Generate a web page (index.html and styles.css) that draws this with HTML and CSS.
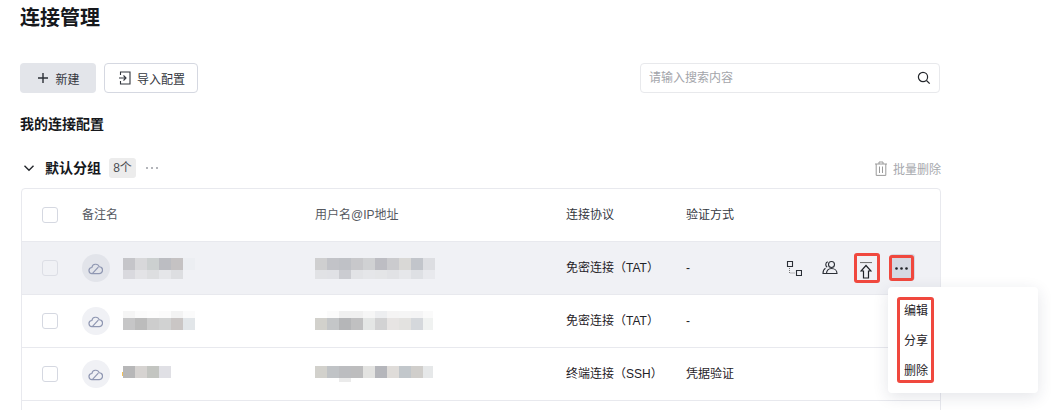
FILE: index.html
```html
<!DOCTYPE html>
<html lang="zh-CN">
<head>
<meta charset="utf-8">
<title>连接管理</title>
<link rel="stylesheet" href="styles.css">
</head>
<body>
<main class="page">
  <h1 class="title">连接管理</h1>
  <div class="toolbar">
    <div class="toolbar-left">
      <button class="btn btn-primary" type="button">
        <svg class="icon14" viewBox="0 0 14 14"><path d="M7 2v10M2 7h10" fill="none" stroke="#2b2f36" stroke-width="1.4"/></svg>
        <span>新建</span>
      </button>
      <button class="btn btn-outline" type="button">
        <svg class="icon14" viewBox="0 0 14 14"><path d="M2.500 4V1h9.500v12H2.500v-3M1 7h7M5.500 4.500 8 7 5.500 9.500" fill="none" stroke="#33373e" stroke-width="1.100"/></svg>
        <span>导入配置</span>
      </button>
    </div>
    <div class="search">
      <input class="search-input" type="text" placeholder="请输入搜索内容">
      <svg class="icon14" viewBox="0 0 14 14"><circle cx="6" cy="6" r="4.600" fill="none" stroke="#23262b" stroke-width="1.200"/><path d="m9.500 9.500 3.200 3.200" stroke="#23262b" stroke-width="1.200"/></svg>
    </div>
  </div>
  <h2 class="section">我的连接配置</h2>
  <div class="group-bar">
    <div class="group-left">
      <svg class="chevron" viewBox="0 0 12 12"><path d="m1.500 3.800 4.500 4.500 4.500-4.500" fill="none" stroke="#23262b" stroke-width="1.400"/></svg>
      <strong class="group-name">默认分组</strong>
      <span class="badge">8个</span>
      <svg class="group-more" viewBox="0 0 14 4"><circle cx="2" cy="2" r="1" fill="#9a9ca3"/><circle cx="7" cy="2" r="1" fill="#9a9ca3"/><circle cx="12" cy="2" r="1" fill="#9a9ca3"/></svg>
    </div>
    <div class="bulk">
      <svg class="trash" viewBox="0 0 12 15"><path d="M0 3h12M4 3V1h4v2M1.200 3v11.400h9.600V3M4.500 5.500v6.500M7.500 5.500v6.500" fill="none" stroke="#9a9a9a" stroke-width="1"/></svg>
      <span>批量删除</span>
    </div>
  </div>

  <section class="table">
    <div class="row head">
      <span class="check"></span>
      <span class="cell-name">备注名</span>
      <span>用户名@IP地址</span>
      <span>连接协议</span>
      <span>验证方式</span>
      <span></span>
    </div>

    <div class="row active">
      <span class="check"></span>
      <div class="cell-name">
        <span class="avatar">
          <svg class="cloud" viewBox="0 0 16 14"><path d="M4.500 12.500a3.300 3.300 0 0 1-.4-6.600 4.100 4.100 0 0 1 7.900-.8 3.700 3.700 0 0 1-.3 7.400zM4.800 12.300 11 5.500" fill="none" stroke="#8f97b2" stroke-width="1.300"/></svg>
        </span>
        <svg class="mosaic name-mosaic" viewBox="0 0 72 52">
          <rect x="0" y="16" width="12" height="12" fill="#c5c5c9"/><rect x="12" y="16" width="12" height="12" fill="#d8d8da"/><rect x="24" y="16" width="12" height="12" fill="#ccd0d0"/><rect x="36" y="16" width="12" height="12" fill="#bcbdc2"/><rect x="48" y="16" width="12" height="12" fill="#c5c2c3"/><rect x="60" y="16" width="12" height="12" fill="#eceef2"/>
          <rect x="0" y="28" width="12" height="9" fill="#d9d9de"/><rect x="12" y="28" width="12" height="9" fill="#e3e3e6"/><rect x="24" y="28" width="12" height="9" fill="#dddee0"/><rect x="36" y="28" width="12" height="9" fill="#e5e6e9"/><rect x="48" y="28" width="12" height="9" fill="#dddee1"/>
        </svg>
      </div>
      <svg class="mosaic ip-mosaic" viewBox="0 0 120 52">
        <rect x="0" y="16" width="12" height="12" fill="#cfcfd0"/><rect x="12" y="16" width="12" height="12" fill="#c2c3c8"/><rect x="24" y="16" width="12" height="12" fill="#bfc1c6"/><rect x="36" y="16" width="12" height="12" fill="#c8c8cb"/><rect x="48" y="16" width="12" height="12" fill="#d0d1d3"/><rect x="60" y="16" width="12" height="12" fill="#bdbdc3"/><rect x="72" y="16" width="12" height="12" fill="#cbcbce"/><rect x="84" y="16" width="12" height="12" fill="#d9d8d6"/><rect x="96" y="16" width="12" height="12" fill="#c2c5cb"/><rect x="108" y="16" width="12" height="12" fill="#dddee2"/>
        <rect x="0" y="28" width="12" height="9" fill="#e1e2e5"/><rect x="12" y="28" width="12" height="9" fill="#e0e1e5"/><rect x="24" y="28" width="12" height="9" fill="#cbccd1"/><rect x="36" y="28" width="12" height="9" fill="#e2e3e6"/><rect x="48" y="28" width="12" height="9" fill="#e5e6e9"/><rect x="60" y="28" width="12" height="9" fill="#e4e5e7"/><rect x="72" y="28" width="12" height="9" fill="#e1e2e5"/><rect x="84" y="28" width="12" height="9" fill="#e6e7ea"/><rect x="96" y="28" width="12" height="9" fill="#dee0e4"/><rect x="108" y="28" width="12" height="9" fill="#e8e9ed"/>
      </svg>
      <span>免密连接（TAT）</span>
      <span>-</span>
      <div class="actions">
        <button class="act act-topo" type="button">
          <svg class="icon16" viewBox="0 0 16 16"><path d="M1.500 1.500h5v5h-5zM10.500 10.500h5v5h-5z" fill="none" stroke="#2b2f36" stroke-width="1.100"/><path d="M3.500 8v5h5.500" fill="none" stroke="#777" stroke-width="1" stroke-dasharray="1 1"/></svg>
        </button>
        <button class="act act-user" type="button">
          <svg class="icon16" viewBox="0 0 16 16"><circle cx="9.500" cy="4.500" r="3" fill="none" stroke="#2b2f36" stroke-width="1.100"/><path d="M4.500 13.500c0-3 2-5 5-5s5.500 2 5.500 5zM5.800 1.800a3 3 0 0 0-.6 5.400M3.500 8.300C1.800 9.300 1 11.200 1 13.500h3.500" fill="none" stroke="#2b2f36" stroke-width="1.100"/></svg>
        </button>
        <button class="act act-upload" type="button">
          <svg class="icon-upload" viewBox="0 0 12 17"><path d="M0 .5h12" stroke="#777" stroke-width="1.200"/><path d="M6 3.500 11 9H8.500v7h-5V9H1z" fill="none" stroke="#1f2227" stroke-width="1.200"/></svg>
        </button>
        <div class="more-wrap">
          <button class="act act-more" type="button">
            <svg class="icon-more" viewBox="0 0 13 3"><circle cx="1.500" cy="1.500" r="1.300" fill="#1f2227"/><circle cx="6.500" cy="1.500" r="1.300" fill="#1f2227"/><circle cx="11.500" cy="1.500" r="1.300" fill="#1f2227"/></svg>
          </button>
          <div class="menu">
            <ul class="menu-list">
              <li>编辑</li>
              <li>分享</li>
              <li>删除</li>
            </ul>
          </div>
        </div>
      </div>
    </div>

    <div class="row">
      <span class="check"></span>
      <div class="cell-name">
        <span class="avatar">
          <svg class="cloud" viewBox="0 0 16 14"><path d="M4.500 12.500a3.300 3.300 0 0 1-.4-6.600 4.100 4.100 0 0 1 7.900-.8 3.700 3.700 0 0 1-.3 7.400zM4.800 12.300 11 5.500" fill="none" stroke="#8f97b2" stroke-width="1.300"/></svg>
        </span>
        <svg class="mosaic name-mosaic" viewBox="0 0 72 52">
          <rect x="0" y="16" width="12" height="7" fill="#f5f5f5"/><rect x="12" y="16" width="12" height="7" fill="#fbfbfb"/><rect x="24" y="16" width="12" height="7" fill="#fdfdfd"/><rect x="36" y="16" width="12" height="7" fill="#fbfbfb"/><rect x="48" y="16" width="12" height="7" fill="#f3f3f3"/><rect x="60" y="16" width="12" height="7" fill="#fbfbfb"/>
          <rect x="0" y="23" width="12" height="12" fill="#c6c6c7"/><rect x="12" y="23" width="12" height="12" fill="#bcbcbc"/><rect x="24" y="23" width="12" height="12" fill="#cdcdcd"/><rect x="36" y="23" width="12" height="12" fill="#d1d2d2"/><rect x="48" y="23" width="12" height="12" fill="#cac6c5"/><rect x="60" y="23" width="12" height="12" fill="#e2e6e9"/>
        </svg>
      </div>
      <svg class="mosaic ip-mosaic" viewBox="0 0 120 52">
        <rect x="12" y="16" width="12" height="7" fill="#fbfbfb"/><rect x="24" y="16" width="12" height="7" fill="#f0f0f0"/><rect x="36" y="16" width="12" height="7" fill="#f0f0f0"/><rect x="48" y="16" width="12" height="7" fill="#f6f6f6"/><rect x="60" y="16" width="12" height="7" fill="#edeef0"/><rect x="72" y="16" width="12" height="7" fill="#f5f4f4"/><rect x="84" y="16" width="12" height="7" fill="#f5f5f5"/><rect x="96" y="16" width="12" height="7" fill="#f4f4f5"/><rect x="108" y="16" width="10" height="7" fill="#fafafa"/>
        <rect x="0" y="23" width="12" height="12" fill="#d2d1cc"/><rect x="12" y="23" width="12" height="12" fill="#c4c6c8"/><rect x="24" y="23" width="12" height="12" fill="#b5b6b8"/><rect x="36" y="23" width="12" height="12" fill="#c0c0c1"/><rect x="48" y="23" width="12" height="12" fill="#e4e6e5"/><rect x="60" y="23" width="12" height="12" fill="#d2d2d3"/><rect x="72" y="23" width="12" height="12" fill="#e7e4e3"/><rect x="84" y="23" width="12" height="12" fill="#e3e2e0"/><rect x="96" y="23" width="12" height="12" fill="#d5d8dc"/><rect x="108" y="23" width="10" height="12" fill="#f0f2f1"/>
      </svg>
      <span>免密连接（TAT）</span>
      <span>-</span>
      <span></span>
    </div>

    <div class="row">
      <span class="check"></span>
      <div class="cell-name">
        <span class="avatar">
          <svg class="cloud" viewBox="0 0 16 14"><path d="M4.500 12.500a3.300 3.300 0 0 1-.4-6.600 4.100 4.100 0 0 1 7.900-.8 3.700 3.700 0 0 1-.3 7.400zM4.800 12.300 11 5.500" fill="none" stroke="#8f97b2" stroke-width="1.300"/></svg>
        </span>
        <svg class="mosaic name-mosaic" viewBox="0 0 72 52">
          <rect x="-1" y="24" width="1" height="4" fill="#f4c25a"/>
          <rect x="0" y="18" width="12" height="12" fill="#b7b7b8"/><rect x="12" y="18" width="12" height="12" fill="#d6d3d1"/><rect x="24" y="18" width="12" height="12" fill="#c3c5c1"/><rect x="36" y="18" width="12" height="12" fill="#e0e0e5"/>
        </svg>
      </div>
      <svg class="mosaic ip-mosaic" viewBox="0 0 120 52">
        <rect x="0" y="18" width="12" height="12" fill="#d2d1cc"/><rect x="12" y="18" width="12" height="12" fill="#c0c3c6"/><rect x="24" y="18" width="12" height="12" fill="#bcbdc0"/><rect x="36" y="18" width="12" height="12" fill="#bdbdbe"/><rect x="48" y="18" width="12" height="12" fill="#e3e3e1"/><rect x="60" y="18" width="12" height="12" fill="#b5b6bb"/><rect x="72" y="18" width="12" height="12" fill="#dfdcd9"/><rect x="84" y="18" width="12" height="12" fill="#c2c7cb"/><rect x="96" y="18" width="12" height="12" fill="#d0cecb"/><rect x="108" y="18" width="10" height="12" fill="#e6e8e9"/>
        <rect x="24" y="30" width="12" height="4" fill="#ebebeb"/>
      </svg>
      <span>终端连接（SSH）</span>
      <span>凭据验证</span>
      <span></span>
    </div>

    <div class="row"></div>
  </section>
</main>
</body>
</html>
```
FILE: styles.css
```css
* { box-sizing: border-box; }
html, body { margin: 0; height: 410px; overflow: hidden; background: #fff; }
body {
  font-family: "Liberation Sans", "Noto Sans CJK SC", sans-serif;
  font-size: 12px;
  color: #1f2227;
}
.page { width: 941px; padding-left: 20px; }
.title { margin: 0; font-size: 20px; line-height: 36px; font-weight: 700; color: #16181c; }
.toolbar { margin-top: 27px; height: 30px; display: flex; justify-content: space-between; margin-right: 1px; }
.toolbar-left { display: flex; gap: 8px; }
.btn {
  height: 30px; display: flex; align-items: center; justify-content: center;
  font: inherit; color: #33373e; border-radius: 4px; padding: 0; cursor: pointer;
}
.btn-primary { width: 76px; gap: 5px; background: #e3e5ea; border: 0; }
.btn-outline { width: 94px; gap: 5px; justify-content: flex-start; padding-left: 13px; background: #fff; border: 1px solid #d5d8e1; }
.icon14 { width: 14px; height: 14px; display: block; flex: none; }
.icon16 { width: 16px; height: 16px; display: block; }
.search {
  width: 300px; height: 30px; display: flex; align-items: center;
  border: 1px solid #e8e9ec; border-radius: 4px; padding: 0 8px;
}
.search-input {
  flex: 1; min-width: 0; border: 0; outline: 0; padding: 0; font: inherit; background: transparent;
}
.search-input::placeholder { color: #a3a5aa; }
.section { margin: 20px 0 0; font-size: 14px; line-height: 22px; font-weight: 700; color: #16181c; }
.group-bar { margin-top: 23px; height: 20px; display: flex; justify-content: space-between; align-items: center; }
.group-left { display: flex; align-items: center; }
.chevron { width: 12px; height: 12px; margin-left: 3px; }
.group-name { margin-left: 10px; font-size: 14px; line-height: 20px; color: #16181c; }
.badge { margin-left: 8px; width: 27px; height: 20px; line-height: 20px; text-align: center; background: #ececec; border-radius: 3px; color: #4a4d52; }
.group-more { width: 14px; height: 4px; margin-left: 9px; }
.bulk { display: flex; align-items: center; gap: 6px; color: #a6a8ad; }
.trash { width: 12px; height: 15px; }
.table {
  margin: 10px 0 0 1px; width: 920px;
  border: 1px solid #e8e9ee; border-radius: 4px 4px 0 0;
}
.row {
  height: 53px; padding-left: 20px;
  display: grid; grid-template-columns: 40px 233px 251px 120px 100px 1fr;
  align-items: center; line-height: 20px;
  border-bottom: 1px solid #e8e9ee;
}
.head { color: #55585f; }
.head > span:nth-child(4), .head > span:nth-child(5) { color: #33373e; }
.active { background: #f0f1f5; }
.check { width: 16px; height: 16px; border: 1px solid #d5d8e1; border-radius: 3px; background: #fff; }
.active .check { background: #f0f1f5; border-color: #dcdee5; }
.cell-name { display: flex; align-items: center; gap: 13px; }
.avatar { width: 28px; height: 28px; border-radius: 50%; background: #f0f1f5; display: flex; align-items: center; justify-content: center; flex: none; }
.active .avatar { background: #e2e4ea; }
.cloud { width: 15px; height: 13px; display: block; margin-right: 1px; }
.mosaic { display: block; height: 52px; overflow: visible; shape-rendering: crispEdges; }
.name-mosaic { width: 72px; }
.ip-mosaic { width: 120px; }
.actions { display: flex; align-items: center; }
.act { padding: 0; border: 0; background: transparent; display: flex; align-items: center; justify-content: center; cursor: pointer; }
.act-topo { width: 16px; height: 16px; margin-right: 20px; }
.act-user { width: 16px; height: 16px; margin-right: 16px; }
.act-upload { width: 26px; height: 30px; margin-right: 9px; border: 3px solid #f0483e; border-radius: 3px; }
.icon-upload { width: 12px; height: 17px; display: block; margin: 4px 2px 0 0; }
.more-wrap { position: relative; }
.act-more { width: 25px; height: 26px; background: #d5d8e1; border: 3px solid #f0483e; border-radius: 3px; box-shadow: 1px -1px 0 #d5d8e1; }
.icon-more { width: 13px; height: 3px; display: block; }
.menu {
  position: absolute; z-index: 2; top: 32px; left: -1px;
  width: 150px; height: 106px; padding: 10px 9px;
  background: #fff; border-radius: 4px;
  box-shadow: 0 4px 16px rgba(30, 40, 70, .12);
}
.menu-list {
  list-style: none; margin: 0; width: 37px; height: 86px;
  padding: 1px 3px 0 4px; border: 3px solid #f0483e; border-radius: 3px;
  display: flex; flex-direction: column; gap: 10px;
  line-height: 20px; color: #1f2227;
}
```
